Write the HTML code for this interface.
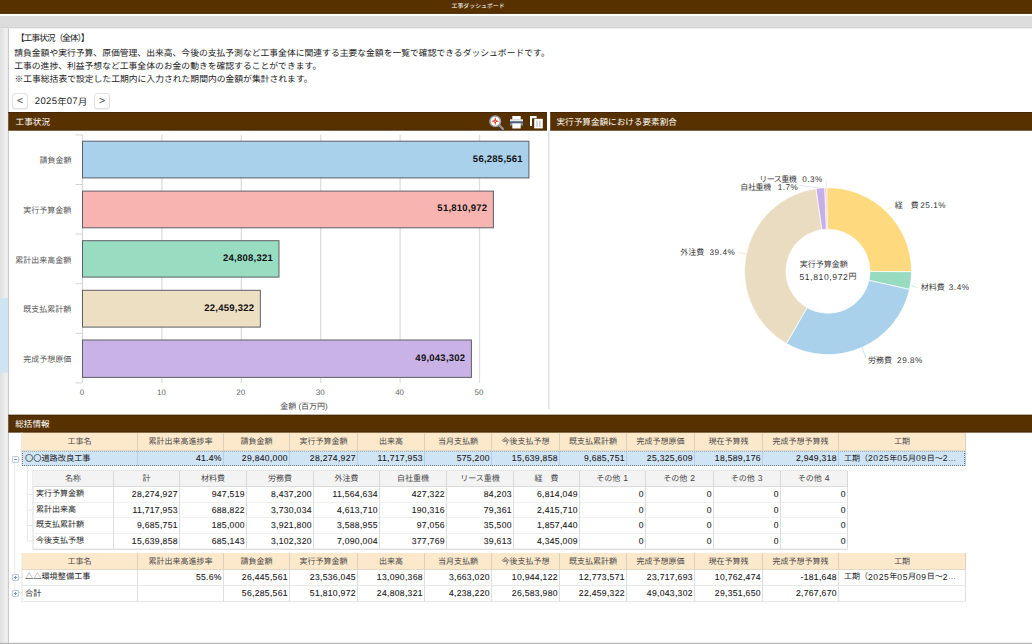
<!DOCTYPE html>
<html lang="ja"><head><meta charset="utf-8"><title>工事ダッシュボード</title>
<style>
*{box-sizing:border-box;margin:0;padding:0}
html,body{width:1032px;height:644px;overflow:hidden;background:#fff}
body{position:relative;text-rendering:geometricPrecision;font-family:"Liberation Sans","Noto Sans CJK JP",sans-serif;font-size:9px;line-height:12px;color:#222}
.a{position:absolute;white-space:nowrap;overflow:hidden}
.a.t{overflow:visible}
.j{display:inline-block;position:relative;white-space:nowrap;vertical-align:top;overflow:visible;text-align:left}
svg{position:absolute;left:0;top:0}
.btn{top:93px;width:16px;height:16px;border:1px solid #e0e0e0;border-radius:3px;background:#fdfdfd;text-align:center;font-size:10.5px;line-height:15px;color:#3a3a3a;box-shadow:0 1px 1px rgba(0,0,0,.06)}
.val{height:14px;text-align:right;font-weight:bold;font-size:9.5px;letter-spacing:.25px;line-height:14px;color:#111}
.tick{top:387px;width:30px;text-align:center;font-size:8px;line-height:12px;height:12px;color:#666}
.dn{font-size:8.2px;line-height:11px;height:11px;color:#333;letter-spacing:.5px}
.row{left:0;width:1032px;overflow:visible}
.c{position:absolute;top:0;height:100%;overflow:hidden;white-space:nowrap;font-size:8px;padding:0 1.5px 0 3px;text-align:right;color:#222;border-right:1px solid #dedede;border-bottom:1px solid #e8e8e8}
.c i{font-style:normal;font-size:8.6px;letter-spacing:.55px}
.c.n{font-size:8.6px;letter-spacing:.3px;padding-right:1.2px;-webkit-text-stroke:.1px}
.c.l{text-align:left;padding-left:3px}
.mh .c{background:#fce8cb;color:#444;text-align:center;padding:0;border-right-color:#ddd0bb;border-bottom-color:#e6d9c4}
.sh .c{background:#f3f3f3;color:#444;text-align:center;padding:0;border-right-color:#d8d8d8;border-bottom-color:#dcdcdc}
.mh .c .j,.sh .c .j{color:#4a4a4a}
.sel .c{background:#cfe4f5;border-right-color:#b9cfe0;border-bottom:0}
.sr .c{border-bottom-color:#f0f0f0;border-right-color:#dcdcdc}
.exp{left:12px;width:7px;height:7px;border:1px solid #bccadb;background:#f6f9fd;border-radius:1px}
.exp:before{content:"";position:absolute;left:1px;top:2px;width:3px;height:1px;background:#8495ad}
.exp.plus:after{content:"";position:absolute;left:2px;top:1px;width:1px;height:3px;background:#8495ad}
</style></head>
<body>
<svg width="1032" height="644" viewBox="0 0 1032 644"><rect x="0" y="0" width="1032" height="13.7" fill="#573200"/>
<rect x="0" y="12.8" width="1032" height=".9" fill="#452400"/>
<rect x="0" y="15.9" width="1032" height="11.2" fill="#dddddd"/>
<rect x="0" y="27" width="1032" height="1.4" fill="#d3d3d3"/>
<rect x="0" y="28.4" width="1.0" height="615.6" fill="#e1e1e1"/>
<rect x="1" y="28.4" width="1.0" height="615.6" fill="#e3e3e3"/>
<rect x="2" y="28.4" width="1.0" height="615.6" fill="#e6e6e6"/>
<rect x="3" y="28.4" width="1.0" height="615.6" fill="#e8e8e8"/>
<rect x="4" y="28.4" width="1.0" height="615.6" fill="#ebebeb"/>
<rect x="5" y="28.4" width="1.0" height="615.6" fill="#eeeeee"/>
<rect x="6" y="28.4" width="1.0" height="615.6" fill="#f0f0f0"/>
<rect x="7" y="28.4" width="0.8" height="615.6" fill="#f3f3f3"/>
<rect x="0" y="298" width="7.6" height="74.5" fill="#cde4f3"/>
<rect x="7.8" y="28.4" width="1" height="615.6" fill="#bdbdbd"/>
<rect x="0" y="642.8" width="1032" height="1.2" fill="#b5b5b5"/>
<rect x="8.3" y="112.1" width="538.7" height="18.35" fill="#573200"/>
<rect x="550.2" y="112.1" width="481.8" height="18.35" fill="#573200"/>
<rect x="22" y="432" width="943" height="1" fill="#fce8cb"/>
<rect x="8.3" y="414.8" width="1023.7" height="17.6" fill="#573200"/>
<rect x="8.3" y="112.10" width="538.7" height=".9" fill="#452400"/>
<rect x="8.3" y="129.55" width="538.7" height=".9" fill="#452400"/>
<rect x="550.2" y="112.10" width="481.8" height=".9" fill="#452400"/>
<rect x="550.2" y="129.55" width="481.8" height=".9" fill="#452400"/>
<rect x="8.3" y="414.80" width="1023.7" height=".9" fill="#452400"/>
<rect x="8.3" y="431.50" width="1023.7" height=".9" fill="#452400"/>
<rect x="548" y="130.5" width="1.6" height="279" fill="#e4e4e4"/>
<rect x="161.25" y="135" width="1.3" height="248" fill="#dedede"/>
<rect x="240.65" y="135" width="1.3" height="248" fill="#dedede"/>
<rect x="320.05" y="135" width="1.3" height="248" fill="#dedede"/>
<rect x="399.45" y="135" width="1.3" height="248" fill="#dedede"/>
<rect x="478.85" y="135" width="1.3" height="248" fill="#dedede"/>
<rect x="81.9" y="135" width="1.2" height="248" fill="#d6d6d6"/>
<rect x="75.5" y="134.4" width="6.5" height="1" fill="#d4d4d4"/>
<rect x="75.5" y="184.0" width="6.5" height="1" fill="#d4d4d4"/>
<rect x="75.5" y="233.6" width="6.5" height="1" fill="#d4d4d4"/>
<rect x="75.5" y="283.2" width="6.5" height="1" fill="#d4d4d4"/>
<rect x="75.5" y="332.8" width="6.5" height="1" fill="#d4d4d4"/>
<rect x="75.5" y="382.4" width="6.5" height="1" fill="#d4d4d4"/>
<rect x="82.50" y="141.20" width="446.41" height="36.70" fill="#a9d1ec" stroke="#5e5e68" stroke-width="1"/>
<rect x="82.50" y="191.10" width="410.88" height="36.70" fill="#f8b4b1" stroke="#5e5e68" stroke-width="1"/>
<rect x="82.50" y="240.70" width="196.48" height="36.40" fill="#98dcc1" stroke="#5e5e68" stroke-width="1"/>
<rect x="82.50" y="290.30" width="177.83" height="36.80" fill="#ecdfc2" stroke="#5e5e68" stroke-width="1"/>
<rect x="82.50" y="340.00" width="388.90" height="37.40" fill="#c9b2e6" stroke="#5e5e68" stroke-width="1"/>
<path d="M826.69 187.71 A83.50 83.50 0 0 1 911.50 271.72 L870.00 271.46 A42.00 42.00 0 0 0 827.34 229.21 Z" fill="#ffd97d" stroke="#fff" stroke-width="0.7"/>
<path d="M911.50 271.72 A83.50 83.50 0 0 1 909.49 289.41 L868.99 280.36 A42.00 42.00 0 0 0 870.00 271.46 Z" fill="#97dcc0" stroke="#fff" stroke-width="0.7"/>
<path d="M909.49 289.41 A83.50 83.50 0 0 1 786.40 343.60 L807.08 307.62 A42.00 42.00 0 0 0 868.99 280.36 Z" fill="#a9d1ec" stroke="#fff" stroke-width="0.7"/>
<path d="M786.40 343.60 A83.50 83.50 0 0 1 815.98 188.57 L821.95 229.64 A42.00 42.00 0 0 0 807.08 307.62 Z" fill="#eadcc0" stroke="#fff" stroke-width="0.7"/>
<path d="M815.98 188.57 A83.50 83.50 0 0 1 824.85 187.76 L826.42 229.23 A42.00 42.00 0 0 0 821.95 229.64 Z" fill="#c6afe8" stroke="#fff" stroke-width="0.7"/>
<path d="M824.85 187.76 A83.50 83.50 0 0 1 826.69 187.71 L827.34 229.21 A42.00 42.00 0 0 0 826.42 229.23 Z" fill="#f6bcc0" stroke="#fff" stroke-width="0.7"/>
<path d="M820 188 L800 185.5" stroke="#ddd2f0" stroke-width=".7" fill="none"/>
<path d="M826.6 187 L826.2 179" stroke="#f8dfe0" stroke-width=".7" fill="none"/>
<path d="M886 210 L892.5 206.8" stroke="#ffe9b0" stroke-width=".8" fill="none"/>
<path d="M911 285 L918 288" stroke="#bfe8d8" stroke-width=".8" fill="none"/>
<path d="M862 347.5 L866 358" stroke="#c6e0f2" stroke-width=".8" fill="none"/>
<path d="M746 254 L738 252.5" stroke="#f0e6d2" stroke-width=".8" fill="none"/>
<rect x="21.5" y="432.5" width="1" height="33" fill="#e3d6c0"/>
<rect x="21.5" y="553" width="1" height="49" fill="#e2e2e2"/>
<rect x="32.5" y="470.5" width="1" height="79" fill="#dcdcdc"/>
<rect x="32.5" y="470.3" width="814.5" height="1" fill="#dcdcdc"/>
<rect x="33" y="549" width="814.5" height="1" fill="#e0e0e0"/>
<path d="M14.7 463.5 V597" stroke="#d4d4d4" stroke-width="1" stroke-dasharray="1 1" fill="none"/>
<path d="M27.4 466.5 V541 M27.4 494.5 H33 M27.4 510 H33 M27.4 525.5 H33 M27.4 541 H33 M15 459.5 H22 M15 577.5 H22 M15 592.5 H22" stroke="#cfcfcf" stroke-width="1" stroke-dasharray="1 1" fill="none"/></svg>
<div class="a t" style="left:451.6px;top:1.4px;width:52.4px;height:12.0px;line-height:12.0px;font-size:5.9px;color:#fff">工事ダッシュボード</div>
<div class="a t" style="left:18.9px;top:31.9px;width:76.8px;height:13.0px;line-height:13.0px;font-size:8.8px;color:#1c1c1c;letter-spacing:-1.1px;margin-left:-3px">【工事状況（全体）】</div>
<div class="a t" style="left:14.2px;top:47.3px;width:527.6px;height:13.0px;line-height:13.0px;font-size:8.8px;color:#1c1c1c">請負金額や実行予算、原価管理、出来高、今後の支払予測など工事全体に関連する主要な金額を一覧で確認できるダッシュボードです。</div>
<div class="a t" style="left:14.2px;top:60.3px;width:299.7px;height:13.0px;line-height:13.0px;font-size:8.8px;color:#1c1c1c">工事の進捗、利益予想など工事全体のお金の動きを確認することができます。</div>
<div class="a t" style="left:14.4px;top:73.1px;width:291.4px;height:13.0px;line-height:13.0px;font-size:8.8px;color:#1c1c1c">※工事総括表で設定した工期内に入力された期間内の金額が集計されます。</div>
<div class="a btn" style="left:12px">&lt;</div>
<div class="a" style="left:34.8px;top:95.8px;font-size:9.5px;line-height:12px;height:12px;color:#222"><span style="letter-spacing:.35px">2025</span><span class="j" style="font-size:9.3px">年</span><span style="letter-spacing:.35px">07</span><span class="j" style="font-size:9.3px">月</span></div>
<div class="a btn" style="left:94px">&gt;</div>
<div class="a t" style="left:15.6px;top:112.2px;width:34.4px;height:20.0px;line-height:20.0px;font-size:8.6px;color:#fff">工事状況</div>
<div class="a t" style="left:556.5px;top:112.2px;width:121.4px;height:20.0px;line-height:20.0px;font-size:8.6px;color:#fff">実行予算金額における要素割合</div>
<div class="a t" style="left:15.2px;top:414.0px;width:34.8px;height:20.0px;line-height:20.0px;font-size:8.6px;color:#fff">総括情報</div>
<svg style="left:488px;top:113px" width="58" height="17" viewBox="0 0 58 17">
<line x1="10.6" y1="11.6" x2="15" y2="15.8" stroke="#8c929a" stroke-width="2.3" stroke-linecap="round"/>
<circle cx="7.2" cy="8.2" r="5.3" fill="#fbfbfb" stroke="#9aa0a7" stroke-width="1.5"/>
<path d="M7.2 4.1 L8.1 7.3 L11.3 8.2 L8.1 9.1 L7.2 12.3 L6.3 9.1 L3.1 8.2 L6.3 7.3Z" fill="#e3271b"/>
<circle cx="7.2" cy="8.2" r=".8" fill="#f9c9c4"/>
<rect x="24.3" y="3" width="8.4" height="4" fill="#fff"/>
<rect x="22" y="6.4" width="13" height="6.2" fill="#8391a3"/>
<rect x="22" y="6.4" width="13" height="1.5" fill="#f2f4f6"/>
<rect x="22" y="8.7" width="13" height="1.6" fill="#4e607a"/>
<rect x="24.3" y="10.4" width="8.4" height="5.1" fill="#fff"/>
<path d="M42 3 h6.6 v2.2 h-4.6 v7.8 h-2z" fill="#fff"/>
<rect x="46.2" y="5.8" width="8.6" height="9.6" fill="#fff"/>
<rect x="48.4" y="7.6" width="1.3" height="6.4" fill="#c3c9d0"/>
<rect x="51.2" y="7.6" width="1.3" height="6.4" fill="#c3c9d0"/>
</svg>
<div class="a tick" style="left:67.0px">0</div>
<div class="a tick" style="left:146.4px">10</div>
<div class="a tick" style="left:225.8px">20</div>
<div class="a tick" style="left:305.2px">30</div>
<div class="a tick" style="left:384.6px">40</div>
<div class="a tick" style="left:464.0px">50</div>
<div class="a t" style="left:39.5px;top:155.2px;width:31.9px;height:12.0px;line-height:12.0px;font-size:8.0px;color:#555">請負金額</div>
<div class="a val" style="left:422.9px;top:152.6px;width:100px">56,285,561</div>
<div class="a t" style="left:23.3px;top:205.1px;width:48.1px;height:12.0px;line-height:12.0px;font-size:8.0px;color:#555">実行予算金額</div>
<div class="a val" style="left:387.4px;top:202.4px;width:100px">51,810,972</div>
<div class="a t" style="left:15.2px;top:254.6px;width:56.2px;height:12.0px;line-height:12.0px;font-size:8.0px;color:#555">累計出来高金額</div>
<div class="a val" style="left:173.0px;top:251.9px;width:100px">24,808,321</div>
<div class="a t" style="left:23.3px;top:304.4px;width:48.1px;height:12.0px;line-height:12.0px;font-size:8.0px;color:#555">既支払累計額</div>
<div class="a val" style="left:154.3px;top:301.7px;width:100px">22,459,322</div>
<div class="a t" style="left:23.3px;top:354.4px;width:48.1px;height:12.0px;line-height:12.0px;font-size:8.0px;color:#555">完成予想原価</div>
<div class="a val" style="left:365.4px;top:351.7px;width:100px">49,043,302</div>
<div class="a" style="left:280.2px;top:401.3px;font-size:7.9px;line-height:12px;height:12px;color:#444"><span class="j" style="color:#4a4a4a;font-size:8px">金額</span> (<span class="j" style="color:#4a4a4a;font-size:8px">百万円</span>)</div>
<div class="a t" style="left:759.2px;top:173.8px;width:37.7px;height:11.0px;line-height:11.0px;font-size:8.0px;color:#3a3a3a;letter-spacing:-.5px">リース重機</div>
<div class="a dn" style="left:802.2px;top:174.0px">0.3%</div>
<div class="a t" style="left:740.2px;top:182.1px;width:31.0px;height:11.0px;line-height:11.0px;font-size:8.0px;color:#3a3a3a;letter-spacing:-.3px">自社重機</div>
<div class="a dn" style="left:777.7px;top:182.3px">1.7%</div>
<div class="a t" style="left:894.7px;top:200.0px;width:23.2px;height:11.0px;line-height:11.0px;font-size:8.0px;color:#3a3a3a">経　費</div>
<div class="a dn" style="left:920.3px;top:200.2px">25.1%</div>
<div class="a t" style="left:680.2px;top:246.5px;width:23.9px;height:11.0px;line-height:11.0px;font-size:8.0px;color:#3a3a3a">外注費</div>
<div class="a dn" style="left:709.5px;top:246.7px">39.4%</div>
<div class="a t" style="left:920.7px;top:281.7px;width:23.7px;height:11.0px;line-height:11.0px;font-size:8.0px;color:#3a3a3a">材料費</div>
<div class="a dn" style="left:948.8px;top:281.9px">3.4%</div>
<div class="a t" style="left:868.0px;top:354.6px;width:23.7px;height:11.0px;line-height:11.0px;font-size:8.0px;color:#3a3a3a">労務費</div>
<div class="a dn" style="left:897.1px;top:354.8px">29.8%</div>
<div class="a t" style="left:799.8px;top:259.3px;width:48.4px;height:11.0px;line-height:11.0px;font-size:8.0px;color:#3a3a3a">実行予算金額</div>
<div class="a dn" style="left:799.4px;top:271.6px;font-size:8.6px;letter-spacing:.6px">51,810,972</div>
<div class="a t" style="left:848.6px;top:271.4px;width:8.2px;height:11.0px;line-height:11.0px;font-size:8.0px;color:#3a3a3a">円</div>
<div class="a row mh" style="top:433px;height:18px;line-height:18.0px"><div class="c" style="left:22px;width:116px"><span class="j">工事名</span></div><div class="c" style="left:138px;width:86px"><span class="j">累計出来高進捗率</span></div><div class="c" style="left:224px;width:66px"><span class="j">請負金額</span></div><div class="c" style="left:290px;width:68px"><span class="j">実行予算金額</span></div><div class="c" style="left:358px;width:67px"><span class="j">出来高</span></div><div class="c" style="left:425px;width:67px"><span class="j">当月支払額</span></div><div class="c" style="left:492px;width:68px"><span class="j">今後支払予想</span></div><div class="c" style="left:560px;width:67px"><span class="j">既支払累計額</span></div><div class="c" style="left:627px;width:68px"><span class="j">完成予想原価</span></div><div class="c" style="left:695px;width:68px"><span class="j">現在予算残</span></div><div class="c" style="left:763px;width:76px"><span class="j">完成予想予算残</span></div><div class="c" style="left:839px;width:127px"><span class="j">工期</span></div></div>
<div class="a row sel" style="top:451px;height:15px;line-height:15.6px"><div class="c l" style="left:22px;width:116px"><span class="j" style="font-size:8.2px">〇〇道路改良工事</span></div><div class="c n" style="left:138px;width:86px">41.4%</div><div class="c n" style="left:224px;width:66px">29,840,000</div><div class="c n" style="left:290px;width:68px">28,274,927</div><div class="c n" style="left:358px;width:67px">11,717,953</div><div class="c n" style="left:425px;width:67px">575,200</div><div class="c n" style="left:492px;width:68px">15,639,858</div><div class="c n" style="left:560px;width:67px">9,685,751</div><div class="c n" style="left:627px;width:68px">25,325,609</div><div class="c n" style="left:695px;width:68px">18,589,176</div><div class="c n" style="left:763px;width:76px">2,949,318</div><div class="c l" style="left:839px;width:127px;padding-left:5px"><span class="j">工期</span><span class="j">（</span><i>2025</i><span class="j">年</span><i>05</i><span class="j">月</span><i>09</i><span class="j">日</span><span class="j">～</span><i>2</i><span class="j">…</span></div></div>
<div class="a" style="left:22px;top:451px;width:943px;height:15px;border:1px dotted #6f7a86;border-top-color:#9fb2c4"></div>
<div class="a row sh" style="top:471px;height:16px;line-height:15.4px"><div class="c" style="left:33px;width:81px"><span class="j">名称</span></div><div class="c" style="left:114px;width:66px"><span class="j">計</span></div><div class="c" style="left:180px;width:67px"><span class="j">材料費</span></div><div class="c" style="left:247px;width:67px"><span class="j">労務費</span></div><div class="c" style="left:314px;width:66px"><span class="j">外注費</span></div><div class="c" style="left:380px;width:67px"><span class="j">自社重機</span></div><div class="c" style="left:447px;width:67px"><span class="j">リース重機</span></div><div class="c" style="left:514px;width:66px"><span class="j">経　費</span></div><div class="c" style="left:580px;width:66px"><span class="j">その他</span><i> 1</i></div><div class="c" style="left:646px;width:68px"><span class="j">その他</span><i> 2</i></div><div class="c" style="left:714px;width:67px"><span class="j">その他</span><i> 3</i></div><div class="c" style="left:781px;width:67px"><span class="j">その他</span><i> 4</i></div></div>
<div class="a row sr" style="top:487px;height:16px;line-height:14.2px"><div class="c l" style="left:33px;width:81px"><span class="j">実行予算金額</span></div><div class="c n" style="left:114px;width:66px">28,274,927</div><div class="c n" style="left:180px;width:67px">947,519</div><div class="c n" style="left:247px;width:67px">8,437,200</div><div class="c n" style="left:314px;width:66px">11,564,634</div><div class="c n" style="left:380px;width:67px">427,322</div><div class="c n" style="left:447px;width:67px">84,203</div><div class="c n" style="left:514px;width:66px">6,814,049</div><div class="c n" style="left:580px;width:66px">0</div><div class="c n" style="left:646px;width:68px">0</div><div class="c n" style="left:714px;width:67px">0</div><div class="c n" style="left:781px;width:67px">0</div></div>
<div class="a row sr" style="top:503px;height:15px;line-height:14.2px"><div class="c l" style="left:33px;width:81px"><span class="j">累計出来高</span></div><div class="c n" style="left:114px;width:66px">11,717,953</div><div class="c n" style="left:180px;width:67px">688,822</div><div class="c n" style="left:247px;width:67px">3,730,034</div><div class="c n" style="left:314px;width:66px">4,613,710</div><div class="c n" style="left:380px;width:67px">190,316</div><div class="c n" style="left:447px;width:67px">79,361</div><div class="c n" style="left:514px;width:66px">2,415,710</div><div class="c n" style="left:580px;width:66px">0</div><div class="c n" style="left:646px;width:68px">0</div><div class="c n" style="left:714px;width:67px">0</div><div class="c n" style="left:781px;width:67px">0</div></div>
<div class="a row sr" style="top:518px;height:16px;line-height:14.2px"><div class="c l" style="left:33px;width:81px"><span class="j">既支払累計額</span></div><div class="c n" style="left:114px;width:66px">9,685,751</div><div class="c n" style="left:180px;width:67px">185,000</div><div class="c n" style="left:247px;width:67px">3,921,800</div><div class="c n" style="left:314px;width:66px">3,588,955</div><div class="c n" style="left:380px;width:67px">97,056</div><div class="c n" style="left:447px;width:67px">35,500</div><div class="c n" style="left:514px;width:66px">1,857,440</div><div class="c n" style="left:580px;width:66px">0</div><div class="c n" style="left:646px;width:68px">0</div><div class="c n" style="left:714px;width:67px">0</div><div class="c n" style="left:781px;width:67px">0</div></div>
<div class="a row sr" style="top:534px;height:15px;line-height:14.2px"><div class="c l" style="left:33px;width:81px"><span class="j">今後支払予想</span></div><div class="c n" style="left:114px;width:66px">15,639,858</div><div class="c n" style="left:180px;width:67px">685,143</div><div class="c n" style="left:247px;width:67px">3,102,320</div><div class="c n" style="left:314px;width:66px">7,090,004</div><div class="c n" style="left:380px;width:67px">377,769</div><div class="c n" style="left:447px;width:67px">39,613</div><div class="c n" style="left:514px;width:66px">4,345,009</div><div class="c n" style="left:580px;width:66px">0</div><div class="c n" style="left:646px;width:68px">0</div><div class="c n" style="left:714px;width:67px">0</div><div class="c n" style="left:781px;width:67px">0</div></div>
<div class="a row mh" style="top:553px;height:17px;line-height:17.0px"><div class="c" style="left:22px;width:116px"><span class="j">工事名</span></div><div class="c" style="left:138px;width:86px"><span class="j">累計出来高進捗率</span></div><div class="c" style="left:224px;width:66px"><span class="j">請負金額</span></div><div class="c" style="left:290px;width:68px"><span class="j">実行予算金額</span></div><div class="c" style="left:358px;width:67px"><span class="j">出来高</span></div><div class="c" style="left:425px;width:67px"><span class="j">当月支払額</span></div><div class="c" style="left:492px;width:68px"><span class="j">今後支払予想</span></div><div class="c" style="left:560px;width:67px"><span class="j">既支払累計額</span></div><div class="c" style="left:627px;width:68px"><span class="j">完成予想原価</span></div><div class="c" style="left:695px;width:68px"><span class="j">現在予算残</span></div><div class="c" style="left:763px;width:76px"><span class="j">完成予想予算残</span></div><div class="c" style="left:839px;width:127px"><span class="j">工期</span></div></div>
<div class="a row mr" style="top:570px;height:16px;line-height:14.6px"><div class="c l" style="left:22px;width:116px"><span class="j" style="font-size:8.2px">△△環境整備工事</span></div><div class="c n" style="left:138px;width:86px">55.6%</div><div class="c n" style="left:224px;width:66px">26,445,561</div><div class="c n" style="left:290px;width:68px">23,536,045</div><div class="c n" style="left:358px;width:67px">13,090,368</div><div class="c n" style="left:425px;width:67px">3,663,020</div><div class="c n" style="left:492px;width:68px">10,944,122</div><div class="c n" style="left:560px;width:67px">12,773,571</div><div class="c n" style="left:627px;width:68px">23,717,693</div><div class="c n" style="left:695px;width:68px">10,762,474</div><div class="c n" style="left:763px;width:76px">-181,648</div><div class="c l" style="left:839px;width:127px;padding-left:5px"><span class="j">工期</span><span class="j">（</span><i>2025</i><span class="j">年</span><i>05</i><span class="j">月</span><i>09</i><span class="j">日</span><span class="j">～</span><i>2</i><span class="j">…</span></div></div>
<div class="a row mr" style="top:586px;height:16px;line-height:15.0px"><div class="c l" style="left:22px;width:116px"><span class="j" style="font-size:8.2px">合計</span></div><div class="c" style="left:138px;width:86px"></div><div class="c n" style="left:224px;width:66px">56,285,561</div><div class="c n" style="left:290px;width:68px">51,810,972</div><div class="c n" style="left:358px;width:67px">24,808,321</div><div class="c n" style="left:425px;width:67px">4,238,220</div><div class="c n" style="left:492px;width:68px">26,583,980</div><div class="c n" style="left:560px;width:67px">22,459,322</div><div class="c n" style="left:627px;width:68px">49,043,302</div><div class="c n" style="left:695px;width:68px">29,351,650</div><div class="c n" style="left:763px;width:76px">2,767,670</div><div class="c l" style="left:839px;width:127px;padding-left:5px"></div></div>
<div class="a exp" style="top:456px"></div>
<div class="a exp plus" style="top:574px"></div>
<div class="a exp plus" style="top:590px"></div>
</body></html>
